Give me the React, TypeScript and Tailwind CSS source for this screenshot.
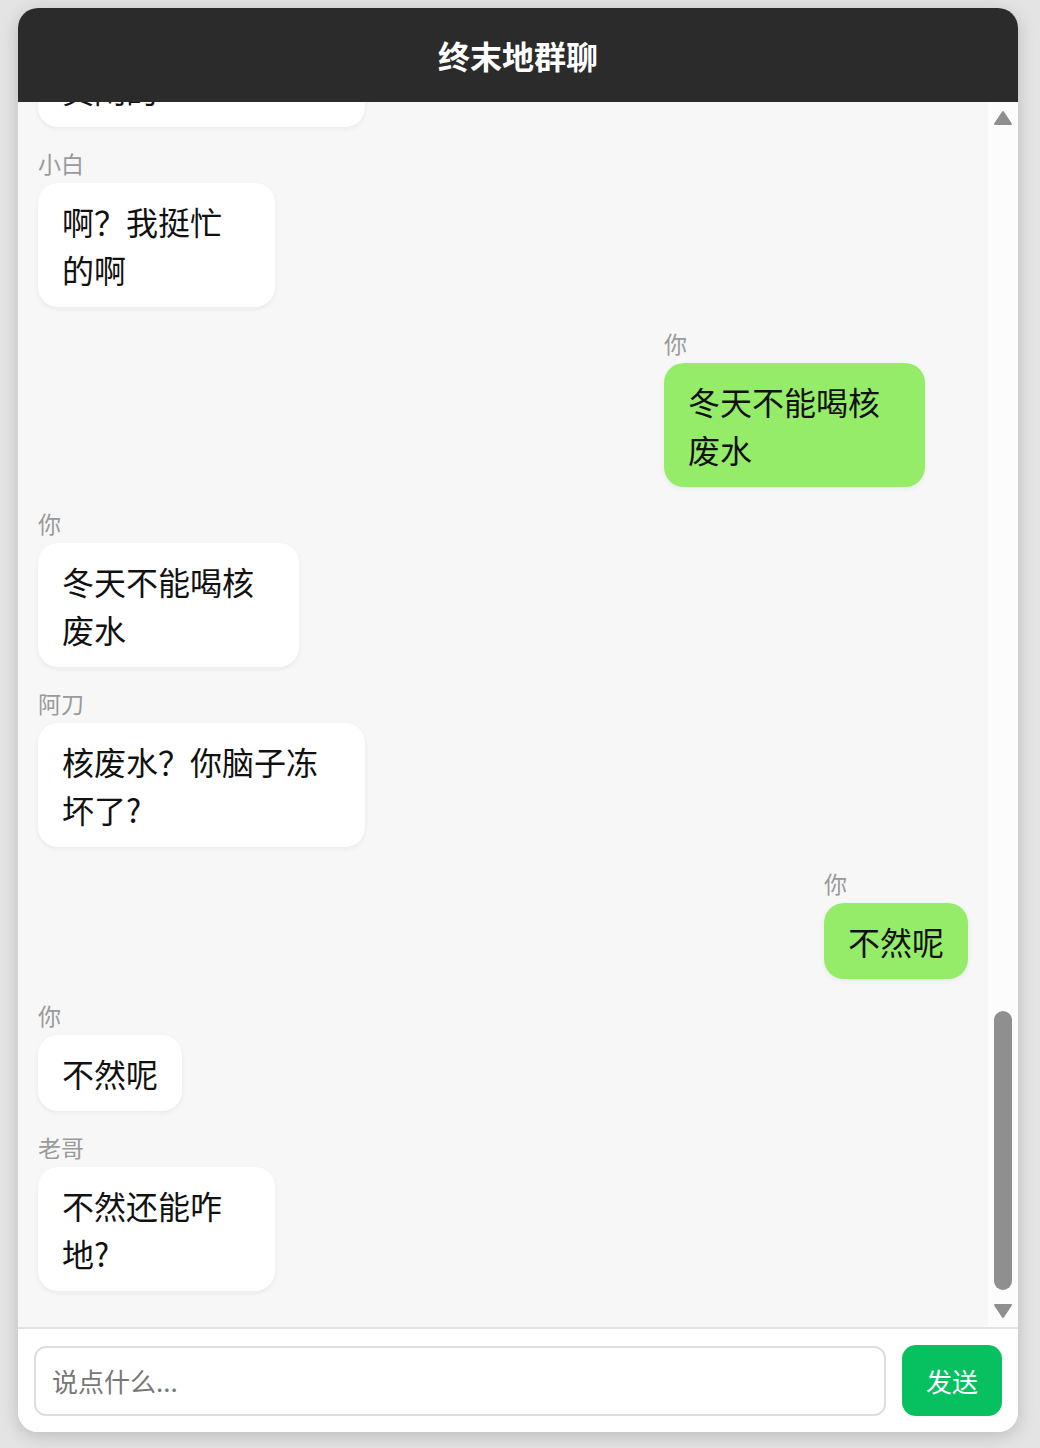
import { useLayoutEffect, useRef } from 'react'

type Msg = {
  name: string
  text: string
  mine?: boolean
  bubble?: string
  group?: string
}

// older messages, scrolled out of view above
const history: Msg[] = [
  { name: '老哥', text: '今天有人去四号谷地吗？' },
  { name: '小白', text: '我去过了，啥也没捡到' },
  { name: '你', text: '我也想去', mine: true },
  { name: '你', text: '我也想去' },
  { name: '阿刀', text: '别去了，外面冷死了' },
  { name: '老哥', text: '那就在基地里待着吧' },
  { name: '小白', text: '基地里也没暖气啊' },
  { name: '你', text: '烧点源石取暖？', mine: true },
  { name: '你', text: '烧点源石取暖？' },
  { name: '阿刀', text: '你是真不怕死' },
  { name: '老哥', text: '哈哈哈哈哈' },
  { name: '小白', text: '说正经的，晚上谁值班？' },
  { name: '你', text: '我来吧', mine: true },
  { name: '你', text: '我来吧' },
  { name: '阿刀', text: '行，记得带上热水' },
  { name: '老哥', text: '热水？哪来的热水' },
  { name: '小白', text: '自己烧啊' },
  { name: '你', text: '冬天喝什么都是冷的', mine: true },
  { name: '你', text: '冬天喝什么都是冷的' },
  { name: '老哥', text: '那就别喝了' },
  { name: '小白', text: '你们聊，我去干活了' },
  { name: '阿刀', text: '一天到晚刷群的人真闲的' },
]

const recent: Msg[] = [
  { name: '小白', text: '啊？我挺忙的啊', bubble: 'max-w-[237px]' },
  { name: '你', text: '冬天不能喝核废水', mine: true, bubble: 'max-w-[261px]', group: 'w-[304px]' },
  { name: '你', text: '冬天不能喝核废水', bubble: 'max-w-[261px]' },
  { name: '阿刀', text: '核废水？你脑子冻坏了?' },
  { name: '你', text: '不然呢', mine: true },
  { name: '你', text: '不然呢' },
  { name: '老哥', text: '不然还能咋地?', bubble: 'max-w-[237px]' },
]

const messages = [...history, ...recent]

function Message({ m }: { m: Msg }) {
  return (
    <div className={`flex ${m.mine ? 'justify-end' : 'justify-start'}`}>
      <div className={`flex flex-col items-start ${m.group ?? ''}`}>
        <div className="mb-1 text-[23px] leading-[32px] text-[#9a9a9a]">{m.name}</div>
        <div
          className={`rounded-[20px] px-6 py-[14px] text-[32px] leading-[48px] text-[#111] shadow-[0_2px_5px_rgba(0,0,0,0.06)] ${
            m.mine ? 'bg-[#95ec69]' : 'bg-white'
          } ${m.bubble ?? 'max-w-[327px]'}`}
        >
          {m.text}
        </div>
      </div>
    </div>
  )
}

function ScrollBar() {
  return (
    <div className="flex w-[30px] shrink-0 flex-col items-center bg-[#fcfcfc]">
      <svg className="h-[30px] w-[30px]" viewBox="0 0 30 30">
        <path d="M15 10L23 22H7z" fill="#8f8f8f" stroke="#8f8f8f" strokeWidth="2" strokeLinejoin="round" />
      </svg>
      <div className="flex-1" />
      <div className="mb-[7px] h-[279px] w-[18px] rounded-full bg-[#8f8f8f]" />
      <svg className="h-[30px] w-[30px]" viewBox="0 0 30 30">
        <path d="M7 8H23L15 20z" fill="#8f8f8f" stroke="#8f8f8f" strokeWidth="2" strokeLinejoin="round" />
      </svg>
    </div>
  )
}

export default function App() {
  const listRef = useRef<HTMLDivElement>(null)

  useLayoutEffect(() => {
    const el = listRef.current
    if (el) el.scrollTop = el.scrollHeight
  }, [])

  return (
    <div className="min-h-screen bg-[#e4e4e4] pl-[18px] pt-2 font-['Noto_Sans_CJK_SC',sans-serif]">
      <div className="flex h-[1424px] w-[1000px] flex-col overflow-hidden rounded-[20px] bg-white shadow-[0_4px_18px_rgba(0,0,0,0.18)]">
        <div className="flex h-[94px] shrink-0 items-center justify-center bg-[#2b2b2b] text-[32px] font-bold text-white">
          终末地群聊
        </div>

        <div className="flex min-h-0 flex-1">
          <div ref={listRef} className="min-w-0 flex-1 overflow-y-auto bg-[#f7f7f7]">
            <div className="flex flex-col gap-5 px-5 pb-9 pt-5">
              {messages.map((m, i) => (
                <Message key={i} m={m} />
              ))}
            </div>
          </div>
          <ScrollBar />
        </div>

        <div className="flex shrink-0 items-center gap-4 border-t-2 border-[#e3e3e3] bg-white p-4">
          <input
            placeholder="说点什么..."
            className="h-[70px] min-w-0 flex-1 rounded-xl border-2 border-[#dedede] px-4 text-[26px] text-[#111] outline-none placeholder:text-[#777]"
          />
          <button className="h-[71px] shrink-0 rounded-[14px] bg-[#07c160] px-6 text-[26px] text-white">
            发送
          </button>
        </div>
      </div>
    </div>
  )
}
